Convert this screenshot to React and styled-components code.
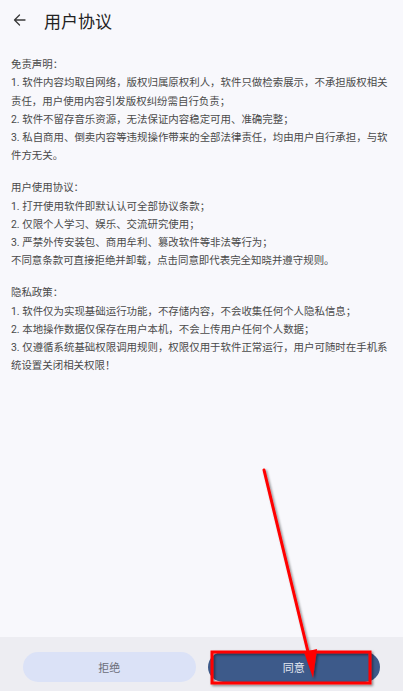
import React from 'react';
import styled, { createGlobalStyle } from 'styled-components';

const sections = [
  {
    title: '免责声明：',
    lines: [
      '1. 软件内容均取自网络，版权归属原权利人，软件只做检索展示，不承担版权相关责任，用户使用内容引发版权纠纷需自行负责；',
      '2. 软件不留存音乐资源，无法保证内容稳定可用、准确完整；',
      '3. 私自商用、倒卖内容等违规操作带来的全部法律责任，均由用户自行承担，与软件方无关。',
    ],
  },
  {
    title: '用户使用协议：',
    lines: [
      '1. 打开使用软件即默认认可全部协议条款；',
      '2. 仅限个人学习、娱乐、交流研究使用；',
      '3. 严禁外传安装包、商用牟利、篡改软件等非法等行为；',
      '不同意条款可直接拒绝并卸载，点击同意即代表完全知晓并遵守规则。',
    ],
  },
  {
    title: '隐私政策：',
    lines: [
      '1. 软件仅为实现基础运行功能，不存储内容，不会收集任何个人隐私信息；',
      '2. 本地操作数据仅保存在用户本机，不会上传用户任何个人数据；',
      '3. 仅遵循系统基础权限调用规则，权限仅用于软件正常运行，用户可随时在手机系统设置关闭相关权限！',
    ],
  },
];

export default function App() {
  return (
    <>
      <GlobalStyle />
      <Page>
        <Header>
          <BackButton>
            <svg width="13" height="12" viewBox="0 0 13 12" fill="none">
              <path d="M12 6H1.5M6.5 1L1.5 6l5 5" stroke="#3a3a3a" strokeWidth="1.3" strokeLinecap="round" strokeLinejoin="round" />
            </svg>
          </BackButton>
          <Title>用户协议</Title>
        </Header>
        <Content>
          {sections.map((s) => (
            <Section key={s.title}>
              <Line>{s.title}</Line>
              {s.lines.map((l) => (
                <Line key={l}>{l}</Line>
              ))}
            </Section>
          ))}
        </Content>
        <Footer>
          <Button>拒绝</Button>
          <Button primary>同意</Button>
        </Footer>
        <Annotation viewBox="0 0 403 691" width="403" height="691">
          <defs>
            <filter id="sh" x="-20%" y="-20%" width="140%" height="140%">
              <feDropShadow dx="1.5" dy="1.5" stdDeviation="1.2" floodColor="#000" floodOpacity="0.45" />
            </filter>
          </defs>
          <g filter="url(#sh)">
            <line x1="264" y1="470" x2="309" y2="656" stroke="#ff0000" strokeWidth="3" strokeLinecap="round" />
            <polygon points="313,678 304,652 317,649" fill="#ff0000" />
            <rect x="212" y="652" width="158" height="31" fill="none" stroke="#ff0000" strokeWidth="3" />
          </g>
        </Annotation>
      </Page>
    </>
  );
}

const GlobalStyle = createGlobalStyle`
  html, body {
    margin: 0;
    padding: 0;
    background: #f8f8fc;
  }
  body {
    font-family: Roboto, "Noto Sans CJK SC", sans-serif;
  }
`;

const Page = styled.div`
  position: relative;
  display: flex;
  flex-direction: column;
  height: 100vh;
  min-height: 691px;
  background: #f8f8fc;
  overflow: hidden;
`;

const Header = styled.div`
  display: flex;
  align-items: center;
  height: 40px;
  padding-left: 13px;
  flex-shrink: 0;
`;

const BackButton = styled.div`
  display: flex;
  align-items: center;
  width: 31px;
`;

const Title = styled.h1`
  margin: 0;
  font-size: 17px;
  font-weight: 400;
  color: #222;
`;

const Content = styled.div`
  flex: 1;
  padding: 16px 11px 0;
  display: flex;
  flex-direction: column;
  gap: 13.5px;
`;

const Section = styled.div`
  display: flex;
  flex-direction: column;
`;

const Line = styled.p`
  margin: 0;
  font-size: 10.45px;
  line-height: 18.3px;
  color: #4a4a4a;
`;

const Footer = styled.div`
  flex-shrink: 0;
  display: flex;
  gap: 12px;
  height: 54px;
  box-sizing: border-box;
  padding: 15px 23px 9px;
  background: #ededf2;
`;

const Button = styled.button`
  flex: 1;
  height: 30px;
  border: none;
  border-radius: 15px;
  font-family: inherit;
  font-size: 11px;
  background: ${(p) => (p.primary ? '#3d5a8a' : '#dbe2f7')};
  color: ${(p) => (p.primary ? '#e4e8f2' : '#6a6d78')};
`;

const Annotation = styled.svg`
  position: absolute;
  left: 0;
  top: 0;
  pointer-events: none;
`;
